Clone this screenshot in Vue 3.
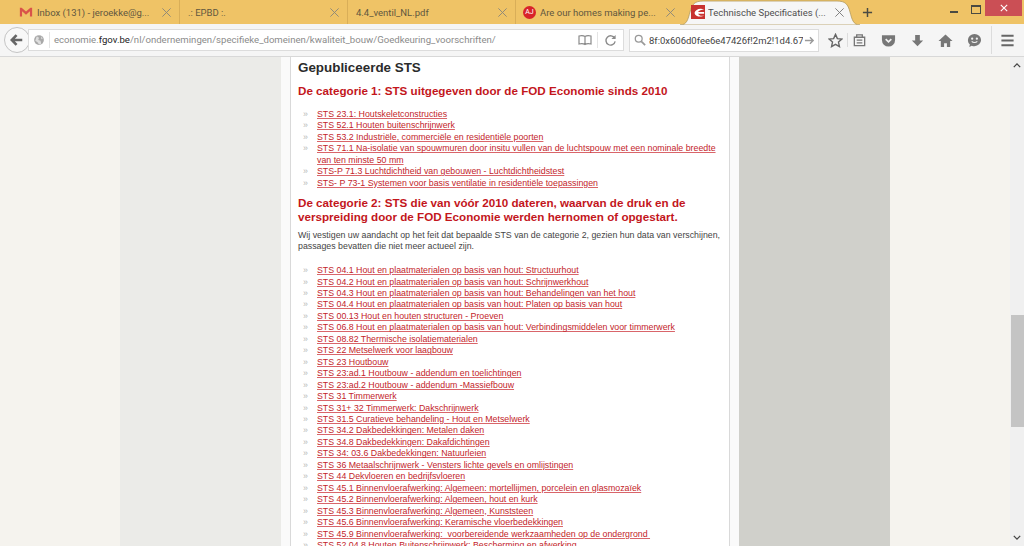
<template>
  <div class="window">
    <div class="tabstrip">
      <div v-for="tab in tabs" :key="tab.title" class="tab" :style="{ width: tab.width + 'px' }">
        <svg v-if="tab.icon === 'gmail'" class="favicon" viewBox="0 0 16 16">
          <path d="M1 3h2l5 4.500L13 3h2v10h-2.500V7L8 11 3.500 7v6H1z" fill="#d9534a" />
        </svg>
        <span v-else-if="tab.icon === 'aj'" class="aj">AJ</span>
        <span class="tab-title">{{ tab.title }}</span>
        <svg class="close" viewBox="0 0 12 12"><path d="M1.500 1.500l9 9M10.500 1.500l-9 9" stroke="#8a8578" stroke-width="1" fill="none" /></svg>
      </div>
      <div class="tab active">
        <svg class="active-shape" viewBox="0 0 180 25" preserveAspectRatio="none">
          <path d="M0 25C7 25 8 19 10 12 12 4 15 1 23 1H157c8 0 11 3 13 11 2 7 3 13 10 13z" fill="#f6f6f6" stroke="#b49a5c" stroke-width="0.800" />
        </svg>
        <svg class="favicon site" viewBox="0 0 16 16">
          <rect width="16" height="16" fill="#c8322f" />
          <path d="M4 9c1-4 6-6 11-4-3 0-6 1-7 3h7v2H8c1 2 4 3 7 2-3 2-10 2-11-3z" fill="#fff" />
        </svg>
        <span class="tab-title dark">Technische Specificaties (...</span>
        <svg class="close" viewBox="0 0 12 12"><path d="M1.500 1.500l9 9M10.500 1.500l-9 9" stroke="#777" stroke-width="1" fill="none" /></svg>
      </div>
      <svg class="plus" viewBox="0 0 12 12"><path d="M6 1v10M1 6h10" stroke="#4a4a42" stroke-width="1.600" /></svg>
      <div class="window-controls">
        <span class="minimize"></span>
        <span class="restore"></span>
        <span class="win-close">
          <svg viewBox="0 0 10 10"><path d="M1 1l8 8M9 1l-8 8" stroke="#fff" stroke-width="1.400" /></svg>
        </span>
      </div>
    </div>

    <div class="navbar">
      <div class="back">
        <svg viewBox="0 0 16 16"><path d="M7.500 2.500L2 8l5.500 5.500M2.500 8H14" stroke="#666" stroke-width="3" fill="none" /></svg>
      </div>
      <div class="urlbar">
        <svg class="globe" viewBox="0 0 16 16">
          <circle cx="8" cy="8" r="6.500" fill="#a8a8a8" />
          <path d="M5 3l3 2-1 3 3 1 1 4-3 1-2-3-3-2zM11 3l2 3-2 1z" fill="#dedede" />
        </svg>
        <span class="url"><span class="url-dim">economie.</span><b>fgov.be</b><span class="url-dim">/nl/ondernemingen/specifieke_domeinen/kwaliteit_bouw/Goedkeuring_voorschriften/</span></span>
        <svg class="reader" viewBox="0 0 14 12"><path d="M7 2.500C5.500 1.500 3 1.500 1 2v8c2-.5 4.500-.5 6 .5 1.500-1 4-1 6-.5V2c-2-.5-4.500-.5-6 .5zM7 2.500v8" stroke="#8a8a8a" stroke-width="1.200" fill="none" /></svg>
        <span class="url-sep"></span>
        <svg class="reload" viewBox="0 0 14 14"><path d="M11.500 4.500A5 5 0 1 0 12 8" stroke="#8a8a8a" stroke-width="1.500" fill="none" /><path d="M12.500 1v4.500H8z" fill="#8a8a8a" /></svg>
      </div>
      <div class="searchbar">
        <svg class="magnifier" viewBox="0 0 14 14"><circle cx="5.500" cy="5.500" r="4" stroke="#999" stroke-width="1.500" fill="none" /><path d="M8.500 8.500L13 13" stroke="#999" stroke-width="2" /></svg>
        <span class="search-text">8f:0x606d0fee6e47426f!2m2!1d4.676</span>
        <svg class="go" viewBox="0 0 12 12"><path d="M1 6h9M6.500 2.500L10 6l-3.500 3.500" stroke="#9a9a9a" stroke-width="1.500" fill="none" /></svg>
      </div>
      <div class="toolbar">
        <svg class="tool star" viewBox="0 0 16 16"><path d="M8 1.500l2 4.500 4.800.5-3.600 3.200 1 4.800L8 12.100 3.800 14.500l1-4.800L1.200 6.500 6 6z" stroke="#666" stroke-width="1.500" fill="none" /></svg>
        <span class="tool-sep"></span>
        <svg class="tool list" viewBox="0 0 16 16"><path d="M2.500 4.500h11v9h-11zM5 2h6v2.500H5zM5 7.500h6M5 10.500h6" stroke="#777" stroke-width="1.400" fill="none" /></svg>
        <svg class="tool pocket" viewBox="0 0 16 16"><path d="M1 2.500h14v5a7 7 0 0 1-14 0z" fill="#777" /><path d="M5 6.500l3 3 3-3" stroke="#f2f2f2" stroke-width="1.800" fill="none" /></svg>
        <svg class="tool download" viewBox="0 0 16 16"><path d="M5.500 2h5v6H14l-6 6-6-6h3.500z" fill="#777" /></svg>
        <svg class="tool home" viewBox="0 0 16 16"><path d="M8 1.500L15.500 8.500H13V15H9.500v-4h-3v4H3V8.500H.5z" fill="#777" /></svg>
        <svg class="tool chat" viewBox="0 0 16 16"><path d="M8 1a7 6.500 0 0 1 0 13c-1 0-2 0-3-.5L2.500 15l.5-3C1.500 11 1 9.500 1 7.500A7 6.500 0 0 1 8 1z" fill="#777" /><circle cx="5.500" cy="6" r="1.200" fill="#f2f2f2" /><circle cx="10.500" cy="6" r="1.200" fill="#f2f2f2" /><path d="M5 9c1.500 1.500 4.500 1.500 6 0" stroke="#f2f2f2" stroke-width="1.200" fill="none" /></svg>
        <span class="tool-sep menu-sep"></span>
        <svg class="tool menu" viewBox="0 0 16 16"><path d="M1.500 3h13M1.500 8h13M1.500 13h13" stroke="#666" stroke-width="2.200" /></svg>
      </div>
    </div>

    <div class="viewport">
      <div class="page">
        <aside class="side-left"></aside>
        <div class="content-edge"></div>
        <main class="content">
          <h1>Gepubliceerde STS</h1>
          <h2>De categorie 1: STS uitgegeven door de FOD Economie sinds 2010</h2>
          <ul class="first">
            <li v-for="item in cat1" :key="item"><a>{{ item }}</a></li>
          </ul>
          <h2 class="second">De categorie 2: STS die van vóór 2010 dateren, waarvan de druk en de verspreiding door de FOD Economie werden hernomen of opgestart.</h2>
          <p>Wij vestigen uw aandacht op het feit dat bepaalde STS van de categorie 2, gezien hun data van verschijnen, passages bevatten die niet meer actueel zijn.</p>
          <ul>
            <li v-for="item in cat2" :key="item"><a>{{ item }}</a></li>
          </ul>
        </main>
        <div class="content-edge"></div>
        <aside class="side-right"></aside>
        <div class="outer-right"></div>
      </div>
      <div class="scrollbar">
        <svg class="arrow" viewBox="0 0 10 6"><path d="M1 5l4-4 4 4" stroke="#444" stroke-width="1.600" fill="none" /></svg>
        <div class="track"><div class="thumb"></div></div>
        <svg class="arrow" viewBox="0 0 10 6"><path d="M1 1l4 4 4-4" stroke="#444" stroke-width="1.600" fill="none" /></svg>
      </div>
    </div>
  </div>
</template>

<script setup>
const tabs = [
  { title: 'Inbox (131) - jeroekke@g...', icon: 'gmail', width: 168 },
  { title: '.: EPBD :.', width: 168 },
  { title: '4.4_ventil_NL.pdf', width: 168 },
  { title: 'Are our homes making pe...', icon: 'aj', width: 164 }
]

const cat1 = [
  'STS 23.1: Houtskeletconstructies',
  'STS 52.1 Houten buitenschrijnwerk',
  'STS 53.2 Industriële, commerciële en residentiële poorten',
  'STS 71.1 Na-isolatie van spouwmuren door insitu vullen van de luchtspouw met een nominale breedte van ten minste 50 mm',
  'STS-P 71.3 Luchtdichtheid van gebouwen - Luchtdichtheidstest',
  'STS- P 73-1 Systemen voor basis ventilatie in residentiële toepassingen'
]

const cat2 = [
  'STS 04.1 Hout en plaatmaterialen op basis van hout: Structuurhout',
  'STS 04.2 Hout en plaatmaterialen op basis van hout: Schrijnwerkhout',
  'STS 04.3 Hout en plaatmaterialen op basis van hout: Behandelingen van het hout',
  'STS 04.4 Hout en plaatmaterialen op basis van hout: Platen op basis van hout',
  'STS 00.13 Hout en houten structuren - Proeven',
  'STS 06.8 Hout en plaatmaterialen op basis van hout: Verbindingsmiddelen voor timmerwerk',
  'STS 08.82 Thermische isolatiematerialen',
  'STS 22 Metselwerk voor laagbouw',
  'STS 23 Houtbouw',
  'STS 23:ad.1 Houtbouw - addendum en toelichtingen',
  'STS 23:ad.2 Houtbouw - addendum -Massiefbouw',
  'STS 31 Timmerwerk',
  'STS 31+ 32 Timmerwerk: Dakschrijnwerk',
  'STS 31.5 Curatieve behandeling - Hout en Metselwerk',
  'STS 34.2 Dakbedekkingen: Metalen daken',
  'STS 34.8 Dakbedekkingen: Dakafdichtingen',
  'STS 34: 03.6 Dakbedekkingen: Natuurleien',
  'STS 36 Metaalschrijnwerk - Vensters lichte gevels en omlijstingen',
  'STS 44 Dekvloeren en bedrijfsvloeren',
  'STS 45.1 Binnenvloerafwerking: Algemeen: mortellijmen, porcelein en glasmozaïek',
  'STS 45.2 Binnenvloerafwerking: Algemeen, hout en kurk',
  'STS 45.3 Binnenvloerafwerking: Algemeen, Kunststeen',
  'STS 45.6 Binnenvloerafwerking: Keramische vloerbedekkingen',
  'STS 45.9 Binnenvloerafwerking:\u00a0 voorbereidende werkzaamheden op de ondergrond\u00a0',
  'STS 52.04.8 Houten Buitenschrijnwerk: Bescherming en afwerking'
]
</script>

<style scoped>
.window {
  width: 1024px;
  height: 546px;
  display: flex;
  flex-direction: column;
  overflow: hidden;
  font-family: "Liberation Sans", Arial, sans-serif;
}
.tabstrip {
  height: 24px;
  background: #efc366;
  display: flex;
  align-items: center;
  padding-left: 12px;
  color: #5a5340;
  font-family: Roboto, sans-serif;
  font-size: 9.500px;
  flex: none;
}
.tab {
  height: 24px;
  display: flex;
  align-items: center;
  gap: 4px;
  padding: 0 7px 0 8px;
  border-right: 1px solid #d9ae58;
  box-sizing: border-box;
  flex: none;
  position: relative;
}
.tab:nth-child(1) { padding-left: 7px; }
.tab:nth-child(4) { border-right: none; padding-left: 7px; padding-right: 4px; }
.tab.active {
  width: 180px;
  padding: 0 15px 0 11px;
  gap: 3px;
  border: none;
}
.active-shape {
  position: absolute;
  left: 0;
  top: 0;
  width: 180px;
  height: 25px;
}
.favicon {
  width: 14px;
  height: 14px;
  flex: none;
  position: relative;
}
.aj {
  width: 13px;
  height: 13px;
  border-radius: 50%;
  background: #d8232a;
  color: #fff;
  font-size: 7px;
  display: flex;
  align-items: center;
  justify-content: center;
  flex: none;
}
.tab-title {
  flex: 1;
  white-space: nowrap;
  overflow: hidden;
  position: relative;
  color: #5f573f;
}
.tab-title.dark { color: #4e4e4e; }
.close {
  width: 11px;
  height: 11px;
  flex: none;
  position: relative;
}
.plus {
  width: 11px;
  height: 11px;
  margin-left: 2px;
  flex: none;
}
.window-controls {
  margin-left: auto;
  height: 24px;
  display: flex;
  align-items: flex-start;
}
.minimize {
  width: 8px;
  height: 2px;
  background: #4a4a42;
  margin: 11px 13px 0 0;
}
.restore {
  width: 8px;
  height: 6px;
  border: 1px solid #4a4a42;
  border-top-width: 2px;
  margin: 5px 4px 0 0;
}
.win-close {
  width: 37px;
  height: 16px;
  background: #cb4f55;
  display: flex;
  align-items: center;
  justify-content: center;
  margin-right: 2px;
}
.win-close svg {
  width: 8px;
  height: 8px;
}
.navbar {
  height: 32px;
  background: #f5f5f5;
  display: flex;
  align-items: center;
  padding-left: 4px;
  flex: none;
}
.back {
  width: 26px;
  height: 26px;
  box-sizing: border-box;
  border-radius: 50%;
  border: 1px solid #c4c4c4;
  background: #f8f8f8;
  display: flex;
  align-items: center;
  justify-content: center;
  flex: none;
}
.back svg {
  width: 14px;
  height: 14px;
}
.urlbar {
  width: 596px;
  height: 22px;
  margin-left: -2px;
  background: #fff;
  border: 1px solid #dcdcdc;
  box-sizing: border-box;
  display: flex;
  align-items: center;
  padding: 0 6px 0 4px;
  flex: none;
}
.globe {
  width: 12px;
  height: 12px;
  flex: none;
}
.url {
  margin-left: 4px;
  padding-left: 4px;
  border-left: 1px solid #e4e4e4;
  font-family: Roboto, sans-serif;
  font-size: 9.600px;
  line-height: 16px;
  color: #333;
  white-space: nowrap;
  flex: 1;
  min-width: 0;
  overflow: hidden;
}
.url b { font-weight: 400; color: #222; }
.url-dim { color: #8b8b8b; }
.reader {
  width: 14px;
  height: 12px;
  margin-left: 6px;
  flex: none;
}
.url-sep {
  width: 1px;
  height: 16px;
  background: #e4e4e4;
  margin-left: 5px;
  flex: none;
}
.reload {
  width: 13px;
  height: 13px;
  margin-left: 6px;
  flex: none;
}
.searchbar {
  width: 190px;
  height: 23px;
  margin-left: 5px;
  background: #fff;
  border: 1px solid #dcdcdc;
  box-sizing: border-box;
  display: flex;
  align-items: center;
  padding-left: 4px;
  flex: none;
}
.magnifier {
  width: 12px;
  height: 12px;
  flex: none;
}
.search-text {
  width: 154px;
  margin-left: 3px;
  overflow: hidden;
  white-space: nowrap;
  font-family: Roboto, sans-serif;
  font-size: 9.500px;
  color: #444;
  flex: none;
}
.go {
  width: 11px;
  height: 11px;
  margin-left: 1px;
  flex: none;
}
.toolbar {
  display: flex;
  align-items: center;
  margin-left: 9px;
  flex: 1;
}
.tool {
  width: 15px;
  height: 15px;
  flex: none;
  margin-right: 13.500px;
}
.star { margin-right: 4px; }
.tool-sep {
  width: 1px;
  height: 14px;
  background: #dcdcdc;
  margin-right: 4px;
}
.list { margin-right: 14px; }
.chat { margin-right: 9px; }
.menu-sep { height: 28px; margin-right: 8px; }
.menu { margin-right: 0; }
.viewport {
  flex: 1;
  display: flex;
  min-height: 0;
  border-top: 1px solid #d8d8d8;
}
.page {
  flex: 1;
  display: flex;
  background: #f5f3ee;
  padding-left: 120px;
  overflow: hidden;
}
.side-left {
  width: 161px;
  background: #ebebe8;
  flex: none;
}
.content {
  width: 440px;
  box-sizing: border-box;
  background: #fff;
  border-left: 1px solid #d9d9d9;
  border-right: 1px solid #d9d9d9;
  padding: 2px 7px 0 7px;
  flex: none;
  color: #444;
  font-size: 8.800px;
  line-height: 11.400px;
}
.content-edge {
  width: 9px;
  background: #fafafa;
  flex: none;
}
.side-right {
  width: 151px;
  background: #d0d0cb;
  flex: none;
}
.outer-right { flex: 1; }
h1 {
  margin: 0;
  font-size: 13.400px;
  line-height: 17px;
  font-weight: 700;
  color: #2b2b2b;
}
h2 {
  margin: 8px 0 0;
  font-size: 11.650px;
  line-height: 14px;
  font-weight: 700;
  color: #c3161c;
}
h2.second { margin-top: 7px; }
p { margin: 5.500px 0 0; }
ul {
  list-style: none;
  margin: 12.600px 0 0;
  padding: 0 0 0 19px;
}
ul.first { margin-top: 11px; }
li {
  position: relative;
  line-height: 11.450px;
}
li::before {
  content: "»";
  position: absolute;
  left: -14px;
  color: #b8b8b8;
}
a {
  color: #c3242a;
  text-decoration: underline;
  text-decoration-color: #d9656a;
}
.scrollbar {
  width: 14px;
  background: #f0f0f0;
  display: flex;
  flex-direction: column;
  align-items: center;
  flex: none;
}
.arrow {
  width: 8px;
  height: 5px;
  margin: 6px 0;
  flex: none;
}
.track {
  flex: 1;
  width: 100%;
  position: relative;
}
.thumb {
  position: absolute;
  top: 241px;
  left: 1px;
  right: 0;
  height: 112px;
  background: #c4c4c4;
}
</style>

<style>
html, body {
  margin: 0;
  overflow: hidden;
}
</style>
